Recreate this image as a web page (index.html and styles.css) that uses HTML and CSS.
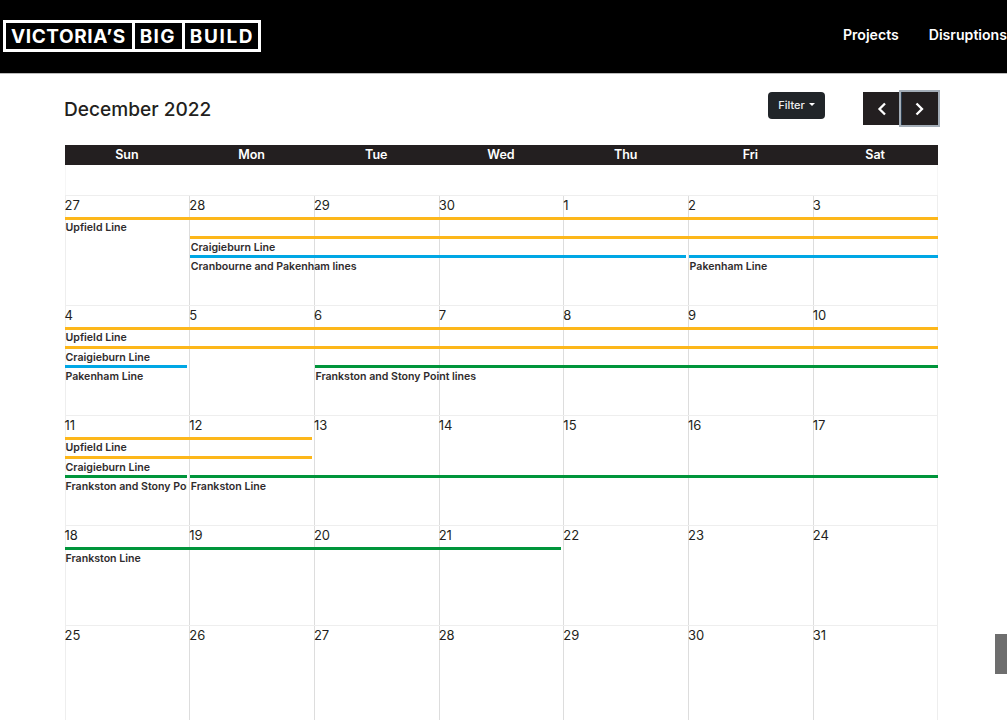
FILE: index.html
```html
<!DOCTYPE html>
<html lang="en">
<head>
<meta charset="utf-8">
<title>Disruptions calendar</title>
<link rel="stylesheet" href="styles.css">
</head>
<body>
<header class="site-header">
  <div class="logo"><span class="logo-word">VICTORIA’S</span><span class="logo-word wide">BIG</span><span class="logo-word wide end">BUILD</span></div>
  <nav class="site-nav"><a>Projects</a><a>Disruptions</a></nav>
</header>
<main class="content">
  <div class="toolbar">
    <h1 class="title">December 2022</h1>
    <button class="filter">Filter<span class="caret"></span></button>
    <div class="pager">
      <button class="page-btn"><svg width="10" height="14" viewBox="0 0 10 14"><path d="M8 1.500 2.500 7 8 12.500" fill="none" stroke="#fff" stroke-width="2.300"/></svg></button>
      <button class="page-btn focused"><svg width="10" height="14" viewBox="0 0 10 14"><path d="M2.500 1.500 8 7l-5.500 5.500" fill="none" stroke="#fff" stroke-width="2.300"/></svg></button>
    </div>
  </div>
  <div class="calendar">
    <div class="dow"><span>Sun</span><span>Mon</span><span>Tue</span><span>Wed</span><span>Thu</span><span>Fri</span><span>Sat</span></div>
    <div class="spacer"></div>

    <section class="week">
      <div class="day d1">27</div><div class="day d2">28</div><div class="day d3">29</div><div class="day d4">30</div><div class="day d5">1</div><div class="day d6">2</div><div class="day d7">3</div>
      <div class="event yellow r1 from1 to8">Upfield Line</div>
      <div class="event yellow r2 from2 to8">Craigieburn Line</div>
      <div class="event blue r3 from2 to6">Cranbourne and Pakenham lines</div>
      <div class="event blue r3 from6 to8">Pakenham Line</div>
    </section>

    <section class="week">
      <div class="day d1">4</div><div class="day d2">5</div><div class="day d3">6</div><div class="day d4">7</div><div class="day d5">8</div><div class="day d6">9</div><div class="day d7">10</div>
      <div class="event yellow r1 from1 to8">Upfield Line</div>
      <div class="event yellow r2 from1 to8">Craigieburn Line</div>
      <div class="event blue r3 from1 to2">Pakenham Line</div>
      <div class="event green r3 from3 to8">Frankston and Stony Point lines</div>
    </section>

    <section class="week">
      <div class="day d1">11</div><div class="day d2">12</div><div class="day d3">13</div><div class="day d4">14</div><div class="day d5">15</div><div class="day d6">16</div><div class="day d7">17</div>
      <div class="event yellow r1 from1 to3">Upfield Line</div>
      <div class="event yellow r2 from1 to3">Craigieburn Line</div>
      <div class="event green r3 from1 to2">Frankston and Stony Point lines</div>
      <div class="event green r3 from2 to8">Frankston Line</div>
    </section>

    <section class="week short">
      <div class="day d1">18</div><div class="day d2">19</div><div class="day d3">20</div><div class="day d4">21</div><div class="day d5">22</div><div class="day d6">23</div><div class="day d7">24</div>
      <div class="event green r1 from1 to5">Frankston Line</div>
    </section>

    <section class="week last">
      <div class="day d1">25</div><div class="day d2">26</div><div class="day d3">27</div><div class="day d4">28</div><div class="day d5">29</div><div class="day d6">30</div><div class="day d7">31</div>
    </section>
  </div>
</main>
<div class="scroll-thumb"></div>
</body>
</html>
```
FILE: styles.css
```css
* { box-sizing: border-box; }
html, body { margin: 0; height: 720px; overflow: hidden; background: #fff; }
body { font-family: "Inter", "Roboto", "Liberation Sans", sans-serif; color: #231f20; }

.site-header { height: 74px; background: #000; border-bottom: 1px solid #bbb; display: flex; justify-content: space-between; align-items: center; padding: 0 0 1px 3px; }
.logo { display: flex; height: 32px; border: 3px solid #fff; background: #000; }
.logo-word { display: flex; align-items: center; height: 100%; padding: 0 6px 0 5px; color: #fff; font-family: "Inter", sans-serif; font-weight: 700; font-size: 19px; letter-spacing: 0.6px; white-space: nowrap; }
.logo-word.wide { letter-spacing: 1.300px; padding-right: 6px; }
.logo-word.end { letter-spacing: 1.600px; padding-right: 4px; }
.logo-word + .logo-word { border-left: 3px solid #fff; }
.site-nav { display: flex; gap: 30px; margin-bottom: 4px; }
.site-nav a { color: #fff; font-weight: 600; font-size: 14.100px; }

.content { padding: 0 69px 0 64.5px; }
.toolbar { display: flex; align-items: flex-start; height: 71px; padding-top: 18px; }
.title { margin: 5px 0 0 -0.5px; flex: 1; font-size: 19.100px; line-height: 24px; font-weight: 500; color: #231f20; }
.filter { width: 57px; height: 27px; border: 0; border-radius: 4px; background: #212529; color: #f0f0f0; font: 500 11px "Inter", sans-serif; padding: 0 0 2px; }
.caret { display: inline-block; margin-left: 4px; vertical-align: 3px; border-top: 3.500px solid #fff; border-left: 3.500px solid transparent; border-right: 3.500px solid transparent; }
.pager { display: flex; margin-left: 38px; }
.page-btn { width: 37.500px; height: 33px; border: 0; background: #231f20; padding: 0; display: flex; align-items: center; justify-content: center; }
.page-btn.focused { position: relative; box-shadow: 0 0 0 2px #a3adb7, inset 1px 0 0 #2b3c4e; }

.calendar { width: 873px; }
.dow { display: grid; grid-template-columns: repeat(7, 1fr); height: 20px; background: #231f20; color: #fff; font-weight: 600; font-size: 12.500px; line-height: 20px; text-align: center; }
.spacer { height: 30px; border-left: 1px solid #f6f6f6; border-right: 1px solid #f6f6f6; }
.week { display: grid; grid-template-columns: repeat(7, 1fr); grid-template-rows: 21px repeat(3, 19.200px) 1fr; height: 110px; border-top: 1px solid #eee; }
.week.short { height: 100px; }
.week.last { height: 120px; }
.day { grid-row: 1 / -1; font-size: 13px; line-height: 19px; text-indent: -1px; color: #231f20; border-left: 1px solid #ddd; }
.week .d1 { border-left: 1px solid #eee; }
.week .d7 { border-right: 1px solid #eee; }
.d1 { grid-column: 1; } .d2 { grid-column: 2; } .d3 { grid-column: 3; } .d4 { grid-column: 4; } .d5 { grid-column: 5; } .d6 { grid-column: 6; } .d7 { grid-column: 7; }
.event { height: 19.200px; border-top: 3px solid; padding-left: 1px; font-size: 10.600px; font-weight: 600; line-height: 15px; white-space: nowrap; overflow: hidden; color: #302c2d; margin-right: 2px; }
.event.yellow { border-color: #fdb71a; }
.event.blue { border-color: #00a7e5; }
.event.green { border-color: #00953b; }
.week.short .event { padding-top: 1px; }
.event.r2 { padding-top: 1px; }
.event.r3 { padding-top: 0.500px; }
.to8 { margin-right: 0; }
.r1 { grid-row: 2; } .r2 { grid-row: 3; } .r3 { grid-row: 4; }
.from1 { grid-column-start: 1; } .from2 { grid-column-start: 2; } .from3 { grid-column-start: 3; } .from6 { grid-column-start: 6; }
.to2 { grid-column-end: 2; } .to3 { grid-column-end: 3; } .to5 { grid-column-end: 5; } .to6 { grid-column-end: 6; } .to8 { grid-column-end: 8; }
.from2, .from3, .from6 { margin-left: 1px; padding-left: 0.500px; }

.scroll-thumb { position: fixed; right: 0; top: 634px; width: 12px; height: 40px; background: #6e6e6e; }
```
